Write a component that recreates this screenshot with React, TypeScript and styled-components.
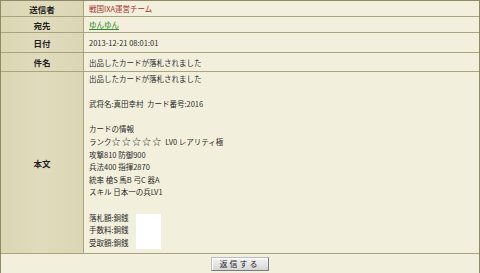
import React from "react";
import styled, { createGlobalStyle } from "styled-components";

const Global = createGlobalStyle`
  html, body { margin: 0; padding: 0; background: #f2f0dc; }
  body { font-family: "Noto Sans CJK JP", "Noto Sans", sans-serif; }
`;

const Table = styled.div`
  width: 480px;
  height: 273px;
  box-sizing: border-box;
  border-top: 1px solid #8f8966;
  border-left: 1px solid #8f8966;
  border-right: 1px solid #8f8966;
  display: grid;
  grid-template-columns: 83px 1fr;
  grid-template-rows: 16px 16px 20px 19px 182px 19px;
  background: #f2f0dc;
  color: #2b2b2b;
`;

const Label = styled.div`
  background: linear-gradient(90deg, #dbd6b4, #e0dbbc 50%, #dbd6b4);
  border-right: 1px solid #aaa37c;
  border-bottom: 1px solid #aaa37c;
  display: flex;
  align-items: center;
  justify-content: center;
  font-weight: bold;
  font-size: 8.5px;
  color: #1f1f1f;
`;

const Value = styled.div<{ $tone?: "red" | "link" }>`
  position: relative;
  background: #f2f0dc;
  border-bottom: 1px solid #aaa37c;
  display: flex;
  align-items: center;
  padding-left: 5px;
  font-size: 7.5px;
  color: ${(p) => (p.$tone === "red" ? "#a8322e" : p.$tone === "link" ? "#2f8a2a" : "#2b2b2b")};
  text-decoration: ${(p) => (p.$tone === "link" ? "underline" : "none")};
`;

const BodyValue = styled.div`
  position: relative;
  background: #f2f0dc;
  border-bottom: 1px solid #aaa37c;
  padding: 1px 0 0 5px;
  font-size: 7.5px;
  line-height: 12.6px;
  color: #2b2b2b;
  white-space: pre;
`;

const Line = styled.div`
  height: 12.6px;
`;

const Stars = styled.span`
  font-size: 9px;
  letter-spacing: 1.2px;
  margin-right: 1px;
`;

const Redact = styled.div`
  position: absolute;
  left: 52px;
  top: 142px;
  width: 25px;
  height: 35px;
  background: #ffffff;
`;

const Footer = styled.div`
  grid-column: 1 / span 2;
  display: flex;
  align-items: center;
  justify-content: center;
  background: #f2f0dc;
`;

const Button = styled.button`
  width: 58px;
  height: 14px;
  padding: 0;
  margin-left: -1px;
  font-family: "Noto Sans CJK JP", sans-serif;
  font-size: 8px;
  letter-spacing: 2px;
  color: #222;
  background: linear-gradient(#f4f4f4, #d6d6d6);
  border: 1px solid #7a7a7a;
  border-top-color: #bbb;
  border-left-color: #bbb;
  box-shadow: inset 1px 1px 0 #fff;
  display: flex;
  align-items: center;
  justify-content: center;
`;

const bodyLines: React.ReactNode[] = [
  "出品したカードが落札されました",
  "",
  "武将名:真田幸村  カード番号:2016",
  "",
  "カードの情報",
  <>
    ランク<Stars>☆☆☆☆☆</Stars> LV0 レアリティ極
  </>,
  "攻撃810 防御900",
  "兵法400 指揮2870",
  "統率 槍S 馬B 弓C 器A",
  "スキル 日本一の兵LV1",
  "",
  "落札額:銅銭",
  "手数料:銅銭",
  "受取額:銅銭",
];

export default function App() {
  return (
    <>
      <Global />
      <Table>
        <Label>送信者</Label>
        <Value $tone="red">戦国IXA運営チーム</Value>
        <Label>宛先</Label>
        <Value $tone="link">ゆんゆん</Value>
        <Label>日付</Label>
        <Value>2013-12-21 08:01:01</Value>
        <Label>件名</Label>
        <Value>出品したカードが落札されました</Value>
        <Label>本文</Label>
        <BodyValue>
          {bodyLines.map((l, i) => (
            <Line key={i}>{l}</Line>
          ))}
          <Redact />
        </BodyValue>
        <Footer>
          <Button>返信する</Button>
        </Footer>
      </Table>
    </>
  );
}
